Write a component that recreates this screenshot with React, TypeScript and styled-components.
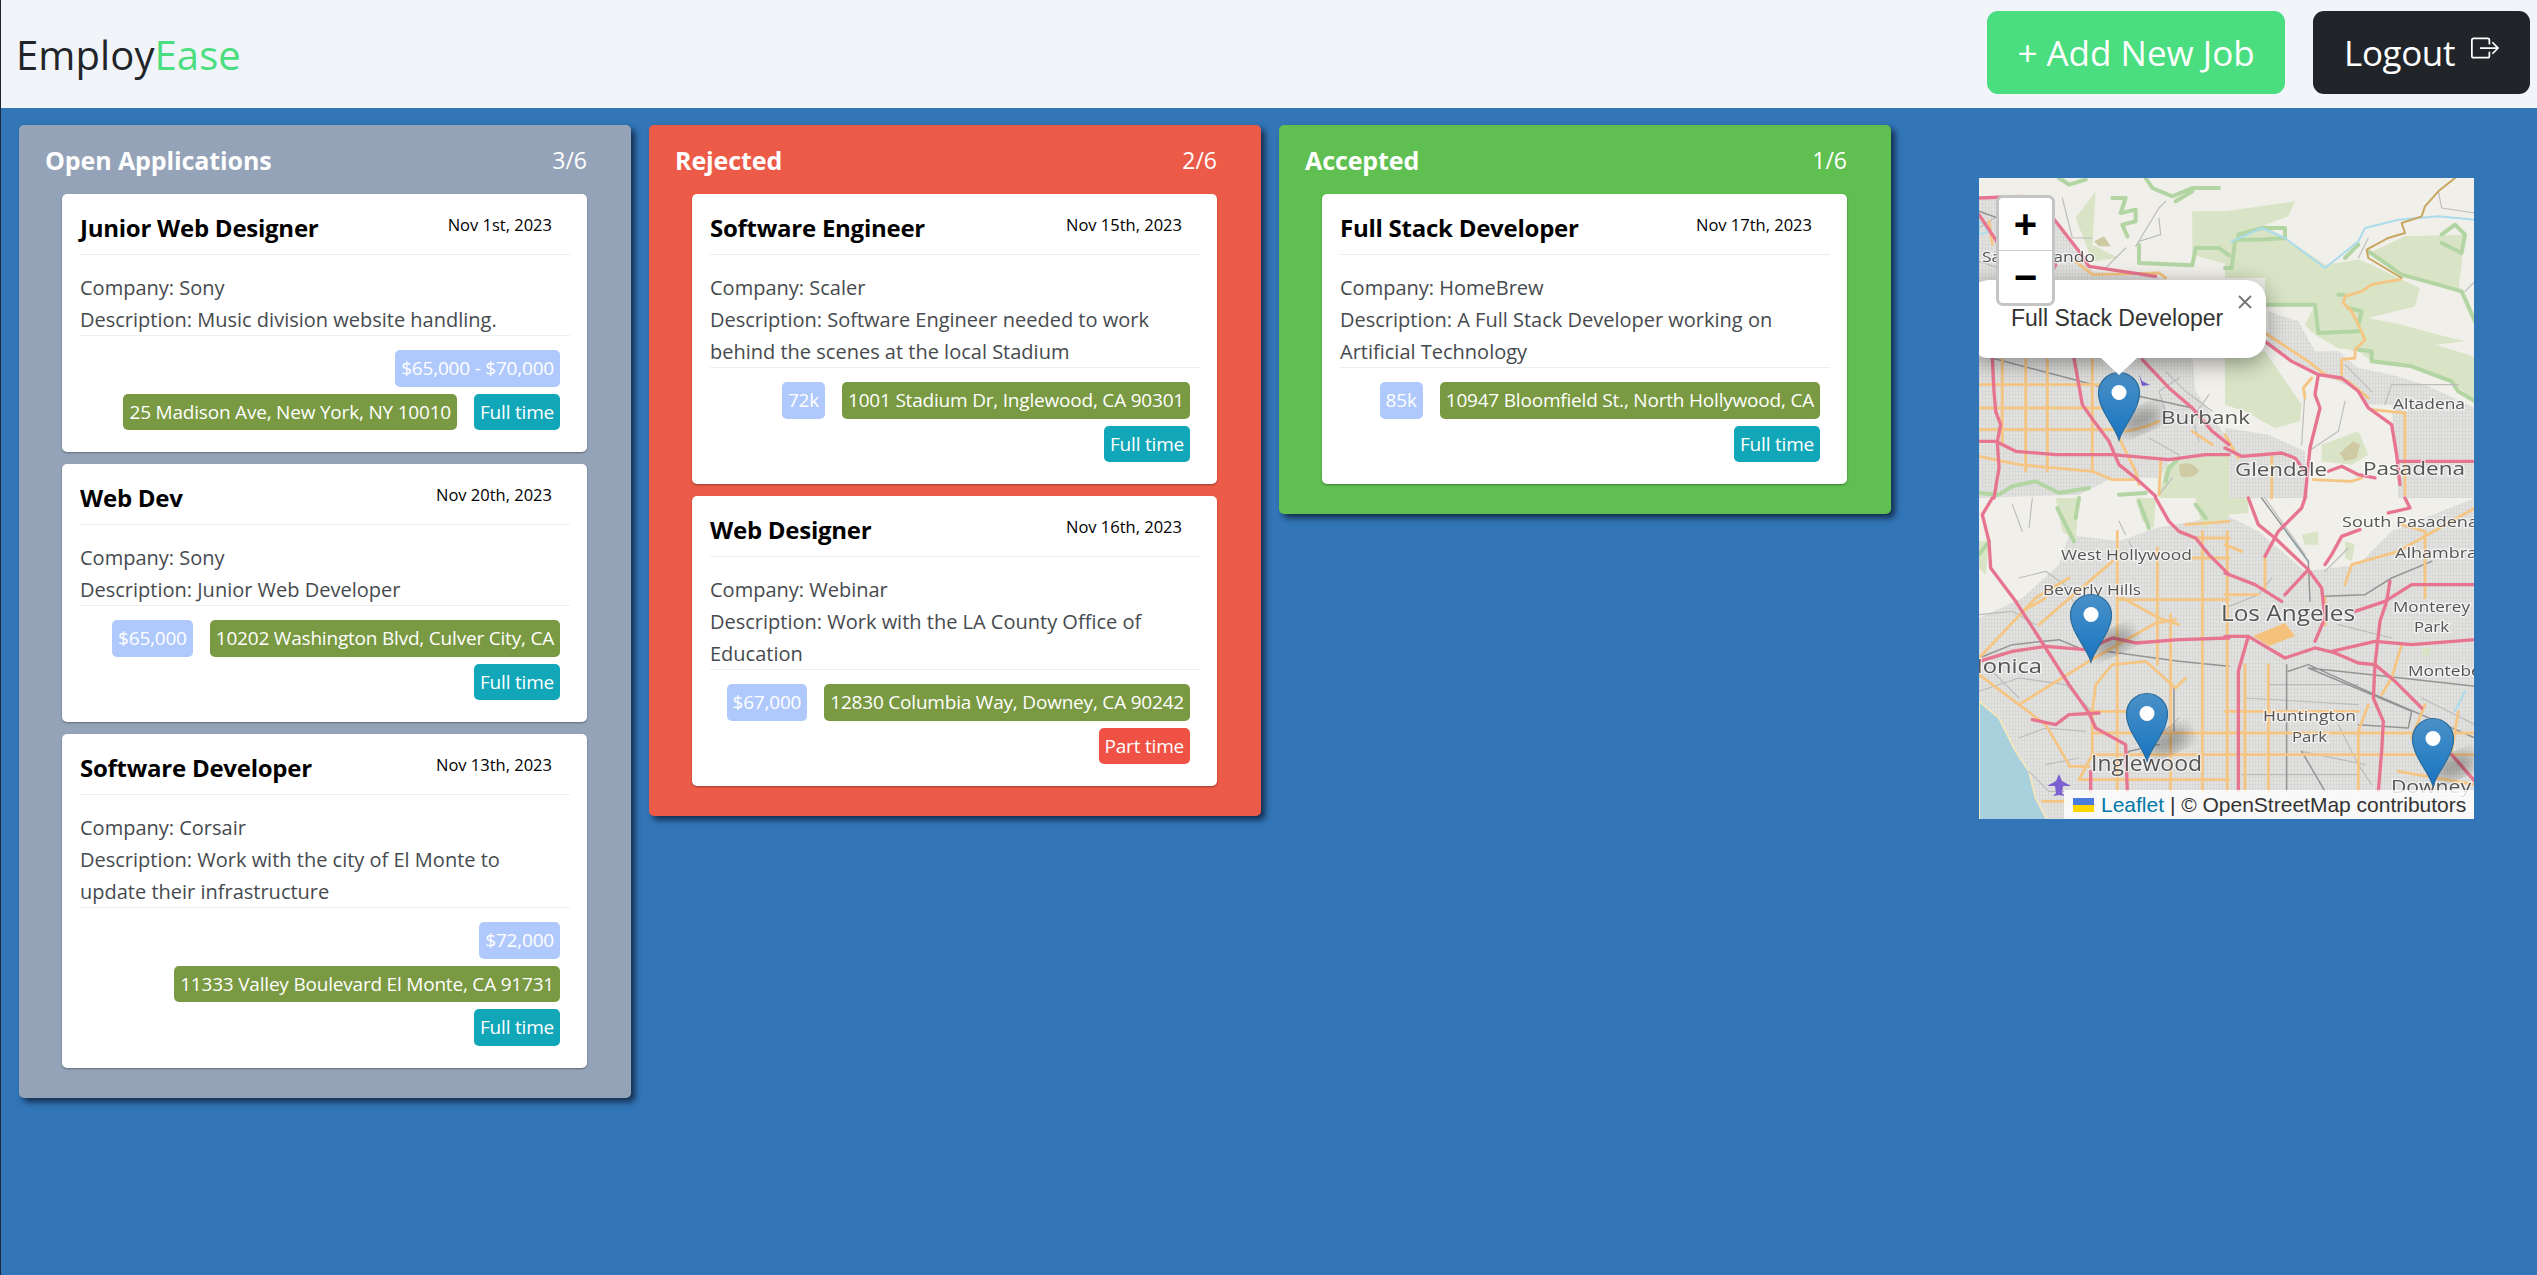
import React, {FC} from 'react';
import styled, {createGlobalStyle} from 'styled-components';
import {BsBoxArrowRight} from 'react-icons/bs';

const GlobalStyle = createGlobalStyle`
  html, body {
    margin: 0;
    padding: 0;
    background: #3276b8;
  }
  * { box-sizing: border-box; }
`;

const Page = styled.div`
  min-height: 100vh;
  border-left: 1px solid #1d2733;
  background: #3276b8;
  font-family: "Open Sans", "Noto Sans", sans-serif;
`;

const NavBar = styled.nav`
  height: 108px;
  background: #f1f5f9;
  display: flex;
  align-items: center;
  justify-content: space-between;
  padding: 0 7px 0 15px;
`;

const Brand = styled.div`
  font-size: 40px;
  color: #212529;
  letter-spacing: 0.1px;
`;

const BrandAccent = styled.span`
  color: #4ade80;
`;

const NavActions = styled.div`
  display: flex;
  gap: 28px;
  margin-bottom: 3px;
`;

const NavButton = styled.button<{$dark?: boolean}>`
  height: 83px;
  border: 0;
  border-radius: 11px;
  font-family: inherit;
  font-size: 35px;
  letter-spacing: ${p => (p.$dark ? '-0.4px' : '0')};
  color: #fff;
  background: ${p => (p.$dark ? '#212529' : '#4ade80')};
  width: ${p => (p.$dark ? '217px' : '298px')};
  display: flex;
  align-items: center;
  justify-content: center;
  gap: 16px;
  padding: 0;
`;

const LogoutIcon = styled(BsBoxArrowRight)`
  width: 28px;
  height: 28px;
  margin-bottom: 10px;
`;

const Board = styled.main`
  display: flex;
  align-items: flex-start;
  gap: 18px;
  padding: 17px 18px;
`;

const Column = styled.section<{$bg: string}>`
  width: 612px;
  flex: none;
  background: ${p => p.$bg};
  border-radius: 5px;
  box-shadow: 4px 4px 6px rgba(10, 20, 40, 0.75);
  padding: 0 44px 30px 26px;
`;

const ColumnHeader = styled.header`
  height: 69px;
  display: flex;
  align-items: center;
  justify-content: space-between;
  color: #fff;
`;

const ColumnTitle = styled.h2`
  margin: 0;
  font-size: 25px;
  font-weight: 700;
  letter-spacing: -0.1px;
`;

const ColumnCount = styled.span`
  font-size: 23px;
`;

const CardList = styled.div`
  margin-left: 17px;
  display: flex;
  flex-direction: column;
  gap: 12px;
`;

const Card = styled.article`
  background: #fff;
  border-radius: 5px;
  box-shadow: 0 1px 2px rgba(0, 0, 0, 0.35);
  padding: 0 17px 22px 18px;
`;

const CardHeader = styled.header`
  height: 61px;
  display: flex;
  justify-content: space-between;
  align-items: center;
  border-bottom: 1px solid #eeeeee;
  padding: 7px 18px 0 0;
`;

const JobTitle = styled.h3`
  margin: 0;
  font-size: 24px;
  font-weight: 700;
  color: #000;
  letter-spacing: -0.25px;
`;

const JobDate = styled.time`
  font-size: 16.5px;
  color: #000;
  margin-bottom: 6px;
`;

const CardBody = styled.div`
  padding-top: 17px;
  border-bottom: 1px solid #eeeeee;
  font-size: 20px;
  line-height: 32px;
  color: #464a4e;
`;

const BodyLine = styled.p`
  margin: 0;
  &:last-child { margin-bottom: -1px; }
`;

const BadgeRow = styled.div`
  display: flex;
  flex-wrap: wrap;
  justify-content: flex-end;
  column-gap: 17px;
  row-gap: 7px;
  margin: 14px 10px 0 0;
`;

const Badge = styled.span<{$bg: string}>`
  height: 36.5px;
  display: inline-flex;
  align-items: center;
  padding: 0 6px;
  border-radius: 5px;
  background: ${p => p.$bg};
  color: #fff;
  font-size: 19px;
  letter-spacing: -0.2px;
`;

const MapFrame = styled.div`
  position: relative;
  width: 495px;
  height: 641px;
  flex: none;
  margin: 53px 0 0 70px;
  overflow: hidden;
  background: #f0efe9;
`;

const MapSvg = styled.svg`
  display: block;
  width: 495px;
  height: 641px;
`;

const ZoomControl = styled.div`
  position: absolute;
  left: 17px;
  top: 17px;
  width: 59px;
  height: 111px;
  z-index: 5;
  background: #fff;
  border: 3px solid #c4c4c4;
  border-radius: 7px;
  display: flex;
  flex-direction: column;
`;

const ZoomButton = styled.div`
  flex: 1;
  display: flex;
  align-items: center;
  justify-content: center;
  font-family: "Liberation Sans", Arial, sans-serif;
  font-size: 40px;
  font-weight: 700;
  color: #000;
  & + & { border-top: 1px solid #ccc; }
`;

const Popup = styled.div`
  position: absolute;
  left: -10px;
  top: 102px;
  width: 297px;
  height: 78px;
  z-index: 4;
  background: #fff;
  border-radius: 20px;
  box-shadow: 0 5px 22px rgba(0, 0, 0, 0.4);
  color: #333;
  font-family: "Liberation Sans", Arial, sans-serif;
  font-size: 23px;
  line-height: 30px;
  padding: 23px 0 0 42px;
`;

const PopupTip = styled.div`
  position: absolute;
  left: 132px;
  top: 78px;
  width: 36px;
  height: 17px;
  background: #fff;
  clip-path: polygon(0 0, 100% 0, 50% 100%);
`;

const PopupClose = styled.svg`
  position: absolute;
  right: 14px;
  top: 15px;
  width: 14px;
  height: 14px;
`;

const Attribution = styled.div`
  position: absolute;
  right: 0;
  bottom: 0;
  z-index: 4;
  height: 29px;
  width: 410px;
  display: flex;
  align-items: center;
  gap: 7px;
  padding-left: 9px;
  background: rgba(255, 255, 255, 0.82);
  color: #333;
  font-family: "Liberation Sans", Arial, sans-serif;
  font-size: 21px;
  white-space: nowrap;
`;

const Flag = styled.svg`
  width: 21px;
  height: 14px;
  flex: none;
`;

const LeafletLink = styled.a`
  color: #0078a8;
  text-decoration: none;
`;

type Layer = 'urban' | 'ocean' | 'park' | 'hill' | 'strip' | 'river' | 'minor' | 'rail' | 'orange' | 'tan' | 'pink';
const crops: Record<string, {x: number; y: number; paths: Partial<Record<Layer, string[]>>}> = {
    A: {
        x: 0,
        y: 0,
        paths: {
            urban: ['M0,540 L640,540 L650,640 L750,790 L750,840 L570,850 L540,900 L400,900 L300,950 L0,960Z', 'M0,60 L60,50 L230,130 L340,280 L560,300 L560,320 L0,320Z'],
            park: ['M640,100 L750,100 L750,260 L640,230Z', 'M560,860 L650,840 L750,830 L750,960 L540,960Z', 'M290,120 L350,40 L340,200 L420,240 L340,250Z'],
            hill: ['M345,190 L375,175 L395,205 L360,205Z', 'M600,860 Q640,845 660,880 Q640,905 605,895Z'],
            strip: [
                'M400,60 L440,60 L425,105 L470,95 L470,130 L430,140 L445,175 M500,0 L520,30 L580,55 L640,30 L720,30 M590,70 L640,40 M480,200 L480,255 L640,262 L650,210 L720,210 L750,232',
                'M0,945 L60,950 L100,925 L170,910 L240,945 L330,930 M240,0 L270,20 L320,5 M420,950 L500,945 M600,840 L570,870 L560,910',
            ],
            river: ['M0,170 L30,160 Q5,130 0,130Z'],
            minor: ['M470,205 L540,90 L560,70 M540,120 L545,170 L480,190 M250,60 L280,180 L340,180 M440,210 L380,270 M560,580 L620,640 L700,700 M600,600 L540,640 L560,700 M690,650 L640,720 L660,790 M510,780 L600,830 M580,900 L540,950 M0,250 L90,280 M90,90 L0,150'],
            rail: ['M0,530 L360,625 M480,655 L640,690 M0,100 L70,125'],
            orange: [
                'M0,620 H360 M0,690 H420 M0,755 H420 M70,545 V800 M140,545 V880 M205,545 V880 M340,545 V880 M420,780 L470,880 L480,920 M440,760 Q500,750 540,730 M545,850 L540,950 M0,835 L120,860 L340,880 L400,905 L470,905 M640,760 L700,800 M290,250 L340,290 L540,285 L560,300 M30,130 L40,200',
            ],
            pink: [
                'M0,60 L130,55 Q190,70 230,130 L300,220 L330,265 L430,280 L530,295 M0,110 L60,200 M230,260 L200,320',
                'M40,540 L45,640 L50,700 L65,740 L55,790 L60,870 L45,960',
                'M0,790 L50,790 L110,820 L230,830 L400,830 L570,845 L680,830 L750,830',
                'M285,540 L310,680 L345,730 L390,790 L420,860 L470,900 L530,955',
                'M490,545 L570,630 L640,690 L700,760 L750,800',
            ],
        },
    },
    B: {
        x: 246,
        y: 0,
        paths: {
            park: [
                'M0,100 L210,70 L190,115 L120,140 L170,175 L240,220 L300,260 L400,245 L440,260 L520,300 L585,330 L570,385 L430,420 L530,440 L640,470 L720,490 L630,500 L730,530 L750,540 L750,670 L680,610 L560,565 L440,550 L400,520 L340,510 L270,470 L240,440 L270,380 L120,380 L120,300 L0,300Z',
                'M430,225 L540,175 L720,170 L700,340 L600,310 L530,290Z',
                'M0,540 L120,520 L230,680 L225,730 L150,750 L60,700 L0,680Z',
                'M290,800 L400,760 L430,830 L380,860 L290,850Z',
            ],
            urban: [
                'M130,400 L220,430 L270,520 L340,520 L400,570 L500,590 L600,620 L750,690 L750,960 L520,960 L500,680 L430,680 L400,640 L340,610 L280,590 L130,500Z',
                'M0,750 L130,770 L240,820 L250,960 L0,960Z',
            ],
            hill: ['M345,825 L385,790 L405,800 L395,840 L360,850Z'],
            strip: [
                'M120,380 L270,380 L280,465 L400,460 M400,515 L440,520 L440,550 L560,565 L680,610 L700,640 L750,670',
                'M430,220 L530,290 L640,320 L710,340 L750,430 M30,190 L20,270 L0,270 M40,170 L110,150 L180,150 L180,180 L100,185 L40,185Z',
                'M650,170 L690,140 L720,170 L710,225 L650,195 M360,240 L400,200 M370,390 L410,400 L400,440 M340,350 L355,350',
            ],
            river: ['M20,190 L110,150 L180,180 L260,240 L300,270 L350,230 L400,190 L420,150 L520,125 L640,115 L750,125'],
            minor: ['M640,40 L650,90 L750,105 M400,240 L430,180 M240,640 L230,800 M360,670 L340,760 L250,820 M720,340 L750,310 M700,620 L500,620 L480,680 M360,560 L440,640'],
            orange: ['M120,465 L250,550 L300,590 L370,610 L430,660 M440,695 L540,705 L540,950 M260,600 L235,630 L240,660 M350,590 L350,545 L390,540 L390,515 L420,485 L400,440 L380,400 L355,375 L360,355 L410,340 L440,320 L490,310 L525,305 M265,905 L380,910 L410,900 M140,830 V960 M0,770 L40,840 M540,850 H750'],
            tan: ['M530,300 L480,270 L430,240 L425,215 L490,180 L540,165 L530,135 L590,115 L600,85 L640,40 L690,0'],
            pink: [
                'M120,490 L200,550 L280,590 L350,600 L400,640 L430,690 L500,740 L515,830 L525,920',
                'M280,590 L270,650 L285,690 L255,810 L240,960',
                'M0,810 L50,835 L170,825 L210,840 L240,880 M310,880 L350,865 L400,890 L450,900',
                'M520,850 L750,850',
            ],
        },
    },
    C: {
        x: 0,
        y: 320,
        paths: {
            urban: ['M0,360 L130,300 L240,200 L270,110 L420,130 L530,90 L750,50 L750,966 L0,966Z'],
            ocean: ['M0,610 L60,660 L110,760 L150,820 L170,900 L205,966 L0,966Z'],
            park: ['M650,0 L750,0 L750,60 L670,90Z', 'M230,0 L300,0 L290,130 L250,100Z', 'M470,0 L530,0 L525,90 L490,70Z', 'M0,130 L30,130 L20,230 L0,210Z'],
            strip: ['M235,30 L270,100 L285,130 M300,0 L290,60 M480,10 L510,90 M0,170 L30,130 M680,60 L650,20'],
            minor: ['M450,130 L470,170 M0,350 L100,340 L170,380 M160,0 L150,90 M100,20 L130,100 M230,260 L330,350 M420,70 L440,110 M120,240 L200,220 L270,270 M0,580 L120,540 L260,560 L340,640 M120,720 L200,690 L320,700 M40,520 L120,600 M200,800 L300,780 M480,770 L600,660 M150,820 L210,880 L260,880'],
            rail: ['M0,480 L100,440 L240,425 L300,450 M380,460 L600,490 L750,505 M585,570 V700 M540,740 L450,760 L430,790'],
            orange: [
                'M415,100 V880 M535,150 V500 M575,350 V880 M670,100 V880 M745,100 V880 M420,305 H750 M340,705 H750 M340,770 H750 M300,845 H750 M330,640 H520 M640,180 H750 M640,120 H750',
                'M0,480 L170,300 L270,240 M120,620 L330,490 L530,375 L590,365 M180,380 L400,190 M430,300 L540,360 L600,380',
                'M340,640 L350,560 L400,500 L500,490 L590,570 L620,540 M200,680 L270,800 M0,530 L120,620 L200,680 M340,640 V770 L300,845 M620,80 L750,70 M130,340 L200,300',
                'M270,805 H330 M190,910 H260',
            ],
            pink: [
                'M40,0 L10,50 L30,130 L35,210 L110,310 L200,450 L270,560 L330,645 L350,690 L440,740 L445,880',
                'M0,490 L100,460 L200,445 L320,455 L400,420 L470,435 L600,425 L750,420',
                'M160,665 L230,680 L270,650 L360,645',
                'M530,0 L570,70 L600,100 L650,120 L690,170 L750,230',
                'M335,820 V880',
            ],
        },
    },
    D: {
        x: 246,
        y: 320,
        paths: {
            urban: ['M0,50 L100,100 L240,220 L400,200 L500,100 L750,0 L750,966 L0,966Z'],
            park: ['M0,0 L70,0 L70,45 L0,50Z', 'M230,110 L280,100 L280,140 L240,140Z', 'M360,130 L390,140 L380,190 L360,180Z', 'M590,450 L620,450 L610,475 L590,470Z'],
            river: ['M175,90 L250,190', 'M720,580 L690,640'],
            minor: ['M0,330 L100,290 L140,240 M300,220 L370,150 M120,0 L240,170 M340,380 L500,420 M340,680 L400,800 L440,860 M230,760 L420,800 M130,560 L400,560 M60,600 L400,620 M50,830 H400 M590,600 L750,680'],
            rail: ['M185,500 V880 M250,500 L450,590 L750,720 M250,510 L560,640 M250,510 L440,530 L750,565 M300,295 L420,290 L500,240 L620,190 M110,0 L250,190 L255,310 M190,520 L250,500 M400,680 L550,690 L560,640 M230,760 L300,880'],
            orange: [
                'M0,640 H400 M0,705 H750 M0,770 H750 M0,140 L50,160 M130,500 V880 M60,500 V880 M300,300 V380 M120,175 V280 M530,80 L600,100 V300 M360,260 L380,200 L520,160 L750,30 M400,880 L400,700 L430,620 M530,440 L500,540 L470,590 M520,820 L750,860 M600,620 L560,720 M700,640 L680,760 M0,290 H100 M640,700 L620,880',
            ],
            pink: [
                'M70,0 L100,80 L150,120 L250,215 M240,0 L230,30 L160,100 L120,175 M250,215 L180,290 M0,225 L90,260 L170,310 M250,215 L290,270 L300,360 L270,430',
                'M70,415 L180,480 L270,450 L330,465 L400,495 L450,500 L510,550 L590,630 M0,415 L70,415 L40,520 L40,880',
                'M320,460 L450,430 L560,440 L750,425',
                'M405,95 L350,115 L320,170 L300,200 M390,340 L480,310 L560,260 L750,260',
                'M495,250 L485,310 L465,370 L450,500 L445,600 L475,670 L470,760 L460,880',
                'M680,770 L750,850',
                'M540,0 L555,30 L490,45',
            ],
        },
    },
};

const layerStyles: {layer: Layer; stroke?: string; fill?: string; width?: number}[] = [
    {layer: 'urban', fill: 'url(#urban-grid)'},
    {layer: 'ocean', fill: '#a8d0dd', stroke: '#f2e6c0', width: 6},
    {layer: 'park', fill: '#d8e4c5'},
    {layer: 'hill', fill: '#cfc9a4'},
    {layer: 'strip', stroke: '#b2d5a3', width: 12},
    {layer: 'river', stroke: '#aadcec', width: 6},
    {layer: 'minor', stroke: '#bcbcbc', width: 3.5},
    {layer: 'rail', stroke: '#949494', width: 4.5},
    {layer: 'orange', stroke: '#f5c583', width: 8.5},
    {layer: 'tan', stroke: '#c9a65e', width: 6},
    {layer: 'pink', stroke: '#e8758f', width: 10},
];

const labels: {text: string; x: number; y: number; w?: number; size: number}[] = [
    {text: 'San Fernando', x: 3, y: 84, w: 113, size: 15},
    {text: 'Burbank', x: 182, y: 246, w: 89, size: 19},
    {text: 'Altadena', x: 414, y: 231, w: 72, size: 14},
    {text: 'Glendale', x: 256, y: 298, w: 92, size: 18},
    {text: 'Pasadena', x: 384, y: 297, w: 102, size: 18},
    {text: 'South Pasadena', x: 363, y: 349, w: 136, size: 14},
    {text: 'Alhambra', x: 416, y: 380, w: 82, size: 14},
    {text: 'Monterey', x: 414, y: 434, w: 77, size: 14},
    {text: 'Park', x: 435, y: 454, w: 35, size: 14},
    {text: 'Montebello', x: 429, y: 498, w: 92, size: 14},
    {text: 'Los Angeles', x: 242, y: 443, w: 134, size: 21},
    {text: 'West Hollywood', x: 82, y: 382, w: 131, size: 14},
    {text: 'Beverly Hills', x: 64, y: 417, w: 98, size: 14},
    {text: 'Santa Monica', x: -86, y: 495, w: 149, size: 20},
    {text: 'Inglewood', x: 112, y: 593, w: 111, size: 21},
    {text: 'Huntington', x: 284, y: 543, w: 93, size: 14},
    {text: 'Park', x: 313, y: 564, w: 35, size: 14},
    {text: 'Downey', x: 412, y: 615, w: 80, size: 19},
];

const MapLabel = styled.text<{$size: number}>`
  font-family: "Open Sans", "Noto Sans", sans-serif;
  font-size: ${p => p.$size}px;
  fill: #555;
  stroke: rgba(255, 255, 255, 0.6);
  stroke-width: 2.5px;
  paint-order: stroke;
`;

const markers = [
    {x: 140, y: 262},
    {x: 112, y: 484},
    {x: 168, y: 583},
    {x: 454, y: 608},
];

const MapArt: FC = () => (
    <MapSvg viewBox="0 0 495 641">
        <defs>
            <pattern id="urban-grid" width="9" height="11" patternUnits="userSpaceOnUse">
                <rect width="9" height="11" fill="#e2e2e0" />
                <path d="M0,0 H9 M0,0 V11" stroke="#b6b6b6" strokeWidth="1.2" />
            </pattern>
            <filter id="tile-blur">
                <feGaussianBlur stdDeviation="0.75" />
            </filter>
            <filter id="label-blur">
                <feGaussianBlur stdDeviation="0.35" />
            </filter>
            <filter id="shadow-blur">
                <feGaussianBlur stdDeviation="7" />
            </filter>
            <linearGradient id="pin-fill" x1="0" y1="0" x2="0" y2="1">
                <stop offset="0" stopColor="#4a90c8" />
                <stop offset="0.55" stopColor="#2e82c4" />
                <stop offset="1" stopColor="#1a74c2" />
            </linearGradient>
        </defs>
        <g filter="url(#tile-blur)">
            <rect width="495" height="641" fill="#f0efe9" />
            {layerStyles.map(({layer, stroke, fill, width}) => (
                <g key={layer} fill={fill ?? 'none'} stroke={stroke ?? 'none'} strokeWidth={width} strokeLinejoin="round" strokeLinecap="round">
                    {Object.entries(crops).map(([name, crop]) => (
                        <g key={name} transform={`translate(${crop.x},${crop.y}) scale(0.3333)`}>
                            {(crop.paths[layer] ?? []).map((d, i) => (
                                <path key={i} d={d} />
                            ))}
                        </g>
                    ))}
                </g>
            ))}
            <path d="M274,458 L306,445 L316,458 L290,468Z" fill="#f5c27c" />
            <path d="M80,596 L83,603 L92,608 L84,608 L83,615 L86,618 L80,617 L74,618 L77,615 L76,608 L68,608 L77,603Z" fill="#7b5fd0" />
            <path d="M160,196 L163,203 L171,207 L163,208" fill="#7b5fd0" />
        </g>
        <g filter="url(#label-blur)">
            {labels.map(({text, x, y, w, size}) => (
                <MapLabel key={text + x} x={x} y={y} $size={size} textLength={w} lengthAdjust="spacingAndGlyphs">
                    {text}
                </MapLabel>
            ))}
        </g>
        {markers.map(({x, y}) => (
            <ellipse key={`s${x}`} cx={x + 22} cy={y - 20} rx="22" ry="11" fill="rgba(0,0,0,0.3)" filter="url(#shadow-blur)" transform={`rotate(-24 ${x + 22} ${y - 20})`} />
        ))}
        {markers.map(({x, y}) => (
            <g key={x} transform={`translate(${x},${y})`}>
                <path d="M0,0 C-4,-14 -20.5,-30 -20.5,-47 A20.5,20.5 0 1 1 20.5,-47 C20.5,-30 4,-14 0,0Z" fill="url(#pin-fill)" stroke="#2a6d9e" strokeWidth="1.2" />
                <circle cx="0" cy="-47.5" r="7.5" fill="#fff" />
            </g>
        ))}
    </MapSvg>
);

type Job = {title: string; date: string; company: string; description: string; salary: string; location: string; type: string};

const columns: {name: string; count: string; color: string; jobs: Job[]}[] = [
    {
        name: 'Open Applications',
        count: '3/6',
        color: '#94a3b8',
        jobs: [
            {title: 'Junior Web Designer', date: 'Nov 1st, 2023', company: 'Sony', description: 'Music division website handling.', salary: '$65,000 - $70,000', location: '25 Madison Ave, New York, NY 10010', type: 'Full time'},
            {title: 'Web Dev', date: 'Nov 20th, 2023', company: 'Sony', description: 'Junior Web Developer', salary: '$65,000', location: '10202 Washington Blvd, Culver City, CA', type: 'Full time'},
            {title: 'Software Developer', date: 'Nov 13th, 2023', company: 'Corsair', description: 'Work with the city of El Monte to update their infrastructure', salary: '$72,000', location: '11333 Valley Boulevard El Monte, CA 91731', type: 'Full time'},
        ],
    },
    {
        name: 'Rejected',
        count: '2/6',
        color: '#ec5b48',
        jobs: [
            {title: 'Software Engineer', date: 'Nov 15th, 2023', company: 'Scaler', description: 'Software Engineer needed to work behind the scenes at the local Stadium', salary: '72k', location: '1001 Stadium Dr, Inglewood, CA 90301', type: 'Full time'},
            {title: 'Web Designer', date: 'Nov 16th, 2023', company: 'Webinar', description: 'Work with the LA County Office of Education', salary: '$67,000', location: '12830 Columbia Way, Downey, CA 90242', type: 'Part time'},
        ],
    },
    {
        name: 'Accepted',
        count: '1/6',
        color: '#5fbf50',
        jobs: [
            {title: 'Full Stack Developer', date: 'Nov 17th, 2023', company: 'HomeBrew', description: 'A Full Stack Developer working on Artificial Technology', salary: '85k', location: '10947 Bloomfield St., North Hollywood, CA', type: 'Full time'},
        ],
    },
];

const JobCard: FC<{job: Job}> = ({job}) => (
    <Card>
        <CardHeader>
            <JobTitle>{job.title}</JobTitle>
            <JobDate>{job.date}</JobDate>
        </CardHeader>
        <CardBody>
            <BodyLine>Company: {job.company}</BodyLine>
            <BodyLine>Description: {job.description}</BodyLine>
        </CardBody>
        <BadgeRow>
            <Badge $bg="#b0c9fd">{job.salary}</Badge>
            <Badge $bg="#799942">{job.location}</Badge>
            <Badge $bg={job.type === 'Part time' ? '#ef5144' : '#11a7b9'}>{job.type}</Badge>
        </BadgeRow>
    </Card>
);

const App: FC = () => (
    <Page>
        <GlobalStyle />
        <NavBar>
            <Brand>
                Employ<BrandAccent>Ease</BrandAccent>
            </Brand>
            <NavActions>
                <NavButton>+ Add New Job</NavButton>
                <NavButton $dark>
                    Logout
                    <LogoutIcon />
                </NavButton>
            </NavActions>
        </NavBar>
        <Board>
            {columns.map(col => (
                <Column key={col.name} $bg={col.color}>
                    <ColumnHeader>
                        <ColumnTitle>{col.name}</ColumnTitle>
                        <ColumnCount>{col.count}</ColumnCount>
                    </ColumnHeader>
                    <CardList>
                        {col.jobs.map(job => (
                            <JobCard key={job.title} job={job} />
                        ))}
                    </CardList>
                </Column>
            ))}
            <MapFrame>
                <MapArt />
                <ZoomControl>
                    <ZoomButton>+</ZoomButton>
                    <ZoomButton>−</ZoomButton>
                </ZoomControl>
                <Popup>
                    Full Stack Developer
                    <PopupClose viewBox="0 0 14 14">
                        <path d="M1,1 L13,13 M13,1 L1,13" stroke="#757575" strokeWidth="1.8" />
                    </PopupClose>
                    <PopupTip />
                </Popup>
                <Attribution>
                    <Flag viewBox="0 0 21 14">
                        <rect width="21" height="7" fill="#4c7be0" />
                        <rect y="7" width="21" height="7" fill="#ffd500" />
                    </Flag>
                    <span>
                        <LeafletLink href="#">Leaflet</LeafletLink> | © OpenStreetMap contributors
                    </span>
                </Attribution>
            </MapFrame>
        </Board>
    </Page>
);

export default App;
